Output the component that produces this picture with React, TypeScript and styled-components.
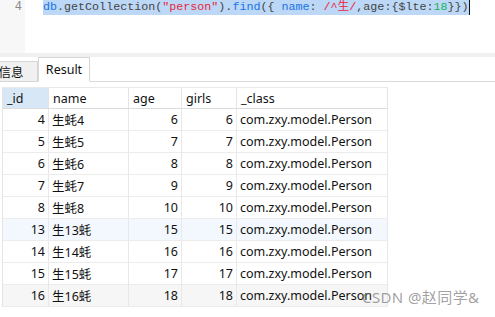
import React from "react";
import styled, { createGlobalStyle } from "styled-components";

const GlobalStyle = createGlobalStyle`
  html, body {
    margin: 0;
    padding: 0;
    background: #fff;
  }
  body {
    font-family: "Noto Sans", "Noto Sans CJK SC", sans-serif;
  }
`;

type Row = { id: number; name: string; age: number; girls: number; cls: string };

const rows: Row[] = [
  { id: 4, name: "生蚝4", age: 6, girls: 6, cls: "com.zxy.model.Person" },
  { id: 5, name: "生蚝5", age: 7, girls: 7, cls: "com.zxy.model.Person" },
  { id: 6, name: "生蚝6", age: 8, girls: 8, cls: "com.zxy.model.Person" },
  { id: 7, name: "生蚝7", age: 9, girls: 9, cls: "com.zxy.model.Person" },
  { id: 8, name: "生蚝8", age: 10, girls: 10, cls: "com.zxy.model.Person" },
  { id: 13, name: "生13蚝", age: 15, girls: 15, cls: "com.zxy.model.Person" },
  { id: 14, name: "生14蚝", age: 16, girls: 16, cls: "com.zxy.model.Person" },
  { id: 15, name: "生15蚝", age: 17, girls: 17, cls: "com.zxy.model.Person" },
  { id: 16, name: "生16蚝", age: 18, girls: 18, cls: "com.zxy.model.Person" },
];

const rowTint = (i: number) => (i === 5 ? "#f2f8fe" : i === 8 ? "#f6f6f6" : "#fff");

function App() {
  return (
    <Page>
      <GlobalStyle />
      <Editor>
        <Gutter>4</Gutter>
        <CodeLine>
          <Selected>
            <Tok $c="#1a73e8">db</Tok>.getCollection(<Tok $c="#e8263c">"person"</Tok>).
            <Tok $c="#1a73e8">find</Tok>({'{'} <Tok $c="#1a73e8">name</Tok>: <Tok $c="#e8263c">/^生/</Tok>,age:{'{'}$lte:
            <Tok $c="#19b35a">18</Tok>{'}}'})
          </Selected>
          <Caret />
        </CodeLine>
      </Editor>
      <Divider />
      <TabBar>
        <Tab>信息</Tab>
        <Tab $active>Result</Tab>
      </TabBar>
      <TableWrap>
        <Grid>
          <HeadCell $first>_id</HeadCell>
          <HeadCell>name</HeadCell>
          <HeadCell>age</HeadCell>
          <HeadCell>girls</HeadCell>
          <HeadCell>_class</HeadCell>
          {rows.map((r, i) => (
            <React.Fragment key={r.id}>
              <Cell $bg={rowTint(i)} $num>{r.id}</Cell>
              <Cell $bg={rowTint(i)}>{r.name}</Cell>
              <Cell $bg={rowTint(i)} $num>{r.age}</Cell>
              <Cell $bg={rowTint(i)} $num>{r.girls}</Cell>
              <Cell $bg={rowTint(i)}>{r.cls}</Cell>
            </React.Fragment>
          ))}
        </Grid>
      </TableWrap>
      <Watermark>CSDN @赵同学&amp;</Watermark>
    </Page>
  );
}

export default App;

const Page = styled.div`
  position: relative;
  width: 495px;
  height: 317px;
  overflow: hidden;
  background: #fff;
`;

const Editor = styled.div`
  display: flex;
  height: 53px;
`;

const Gutter = styled.div`
  width: 25px;
  background: #f7f7f7;
  color: #8a8a8a;
  font-family: "Liberation Mono", monospace;
  font-size: 12px;
  line-height: 15px;
  text-align: right;
  padding-right: 3px;
  box-sizing: border-box;
`;

const CodeLine = styled.div`
  display: flex;
  align-items: flex-start;
  padding-left: 18px;
  font-family: "Liberation Mono", "Noto Sans CJK SC", monospace;
  font-size: 11.7px;
  line-height: 15px;
  color: #444;
  white-space: pre;
`;

const Selected = styled.span`
  background: #bcd8f6;
  height: 15px;
`;

const Tok = styled.span<{ $c: string }>`
  color: ${(p) => p.$c};
`;

const Caret = styled.span`
  width: 1px;
  height: 15px;
  background: #111;
`;

const Divider = styled.div`
  height: 4px;
  background: #f0f0f0;
`;

const TabBar = styled.div`
  display: flex;
  align-items: flex-end;
  height: 25px;
  border-bottom: 1px solid #dadada;
  box-sizing: border-box;
  margin-left: -16px;
`;

const Tab = styled.div<{ $active?: boolean }>`
  height: ${(p) => (p.$active ? 25 : 21)}px;
  margin-bottom: -1px;
  display: flex;
  align-items: center;
  justify-content: center;
  font-size: 12.5px;
  color: #111;
  background: ${(p) => (p.$active ? "#fff" : "#f0f0f0")};
  border: 1px solid #d6d6d6;
  border-bottom-color: ${(p) => (p.$active ? "#fff" : "#d6d6d6")};
  box-sizing: border-box;
  width: ${(p) => (p.$active ? 52 : 54)}px;
`;

const TableWrap = styled.div`
  padding: 5px 0 0 2px;
`;

const Grid = styled.div`
  display: grid;
  grid-template-columns: 46px 80px 53px 55px 151px;
  grid-auto-rows: 22px;
  grid-template-rows: 21px;
  width: max-content;
  border-left: 1px solid #e4e4e4;
  border-top: 1px solid #e9e9e9;
`;

const HeadCell = styled.div<{ $first?: boolean }>`
  display: flex;
  align-items: center;
  padding: 0 4px;
  font-size: 12.5px;
  color: #111;
  background: ${(p) => (p.$first ? "#d8e7f6" : "#fff")};
  border-right: 1px solid #e4e4e4;
  border-bottom: 1px solid #dcdcdc;
`;

const Cell = styled.div<{ $bg: string; $num?: boolean }>`
  display: flex;
  align-items: center;
  justify-content: ${(p) => (p.$num ? "flex-end" : "flex-start")};
  padding: 0 3px;
  font-size: 12.5px;
  color: #111;
  background: ${(p) => p.$bg};
  border-right: 1px solid #e8e8e8;
  border-bottom: 1px solid #ececec;
  white-space: nowrap;
`;

const Watermark = styled.div`
  position: absolute;
  left: 362px;
  top: 286px;
  font-size: 15px;
  color: rgba(120, 120, 120, 0.7);
  letter-spacing: 0.4px;
`;
